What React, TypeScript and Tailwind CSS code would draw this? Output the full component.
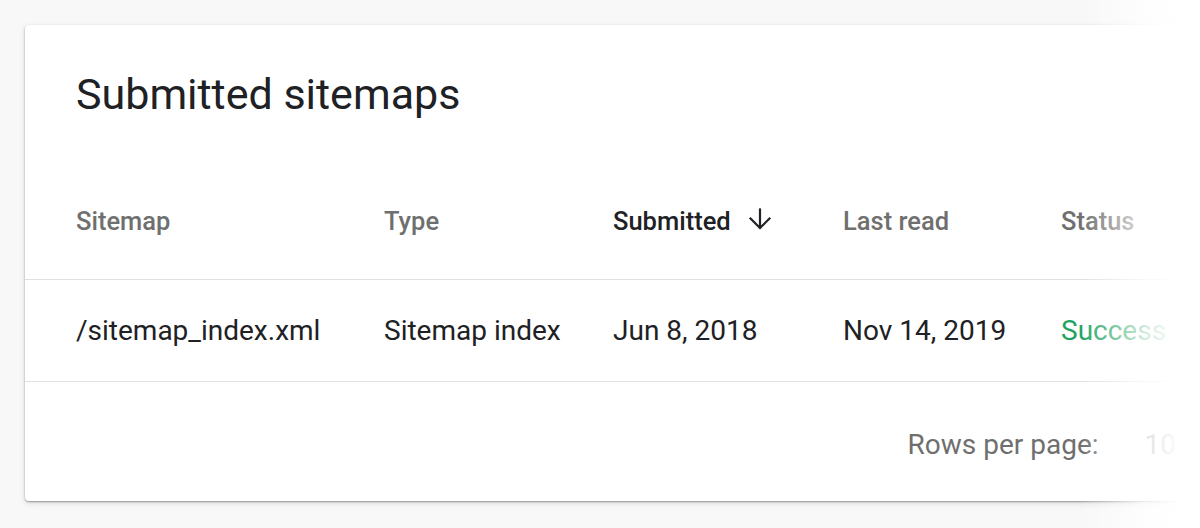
import React from "react";

const font = { fontFamily: "Roboto, 'Noto Sans', Arial, sans-serif" };

const cols = "grid grid-cols-[308px_229px_230px_218px_1fr] items-center pl-[51px]";

const SortArrow: React.FC = () => (
  <svg
    width="24"
    height="24"
    viewBox="0 0 24 24"
    fill="none"
    stroke="#202124"
    strokeWidth="2.2"
    strokeLinecap="square"
    className="ml-[17px] -mt-[6px]"
  >
    <path d="M12 2.5v18" />
    <path d="M2.5 11.5l9.5 9.5 9.5-9.5" />
  </svg>
);

export default function App() {
  return (
    <div
      className="relative h-[528px] w-full overflow-hidden bg-[#f8f8f8] pt-[25px] pl-[25px]"
      style={font}
    >
      <div className="w-[1300px] rounded-[4px] bg-white shadow-[0_1px_2px_rgba(0,0,0,0.35),0_2px_6px_rgba(0,0,0,0.12)]">
        <div className="flex h-[139px] items-center pl-[51px]">
          <h1 className="text-[43px] font-normal leading-none text-[#202124]">
            Submitted sitemaps
          </h1>
        </div>

        <div className={`${cols} h-[116px] border-b border-[#e0e0e0] text-[25.5px] font-medium text-[#6f6f6f]`}>
          <div>Sitemap</div>
          <div>Type</div>
          <div className="flex items-center text-[#202124]">
            <span>Submitted</span>
            <SortArrow />
          </div>
          <div>Last read</div>
          <div>Status</div>
        </div>

        <div className={`${cols} h-[102px] border-b border-[#e0e0e0] text-[28px] text-[#202124]`}>
          <div>/sitemap_index.xml</div>
          <div>Sitemap index</div>
          <div>Jun 8, 2018</div>
          <div>Nov 14, 2019</div>
          <div className="text-[#1ea362]">Success</div>
        </div>

        <div className="flex h-[119px] items-center justify-end pt-[6px] pr-[149px] text-[28px] text-[#6f6f6f]">
          <span>Rows per page:</span>
          <span className="ml-[46px]">10</span>
        </div>
      </div>

      <div className="pointer-events-none absolute top-0 right-0 h-full w-[120px] bg-gradient-to-r from-white/0 via-white/80 via-55% to-white to-85%" />
    </div>
  );
}
